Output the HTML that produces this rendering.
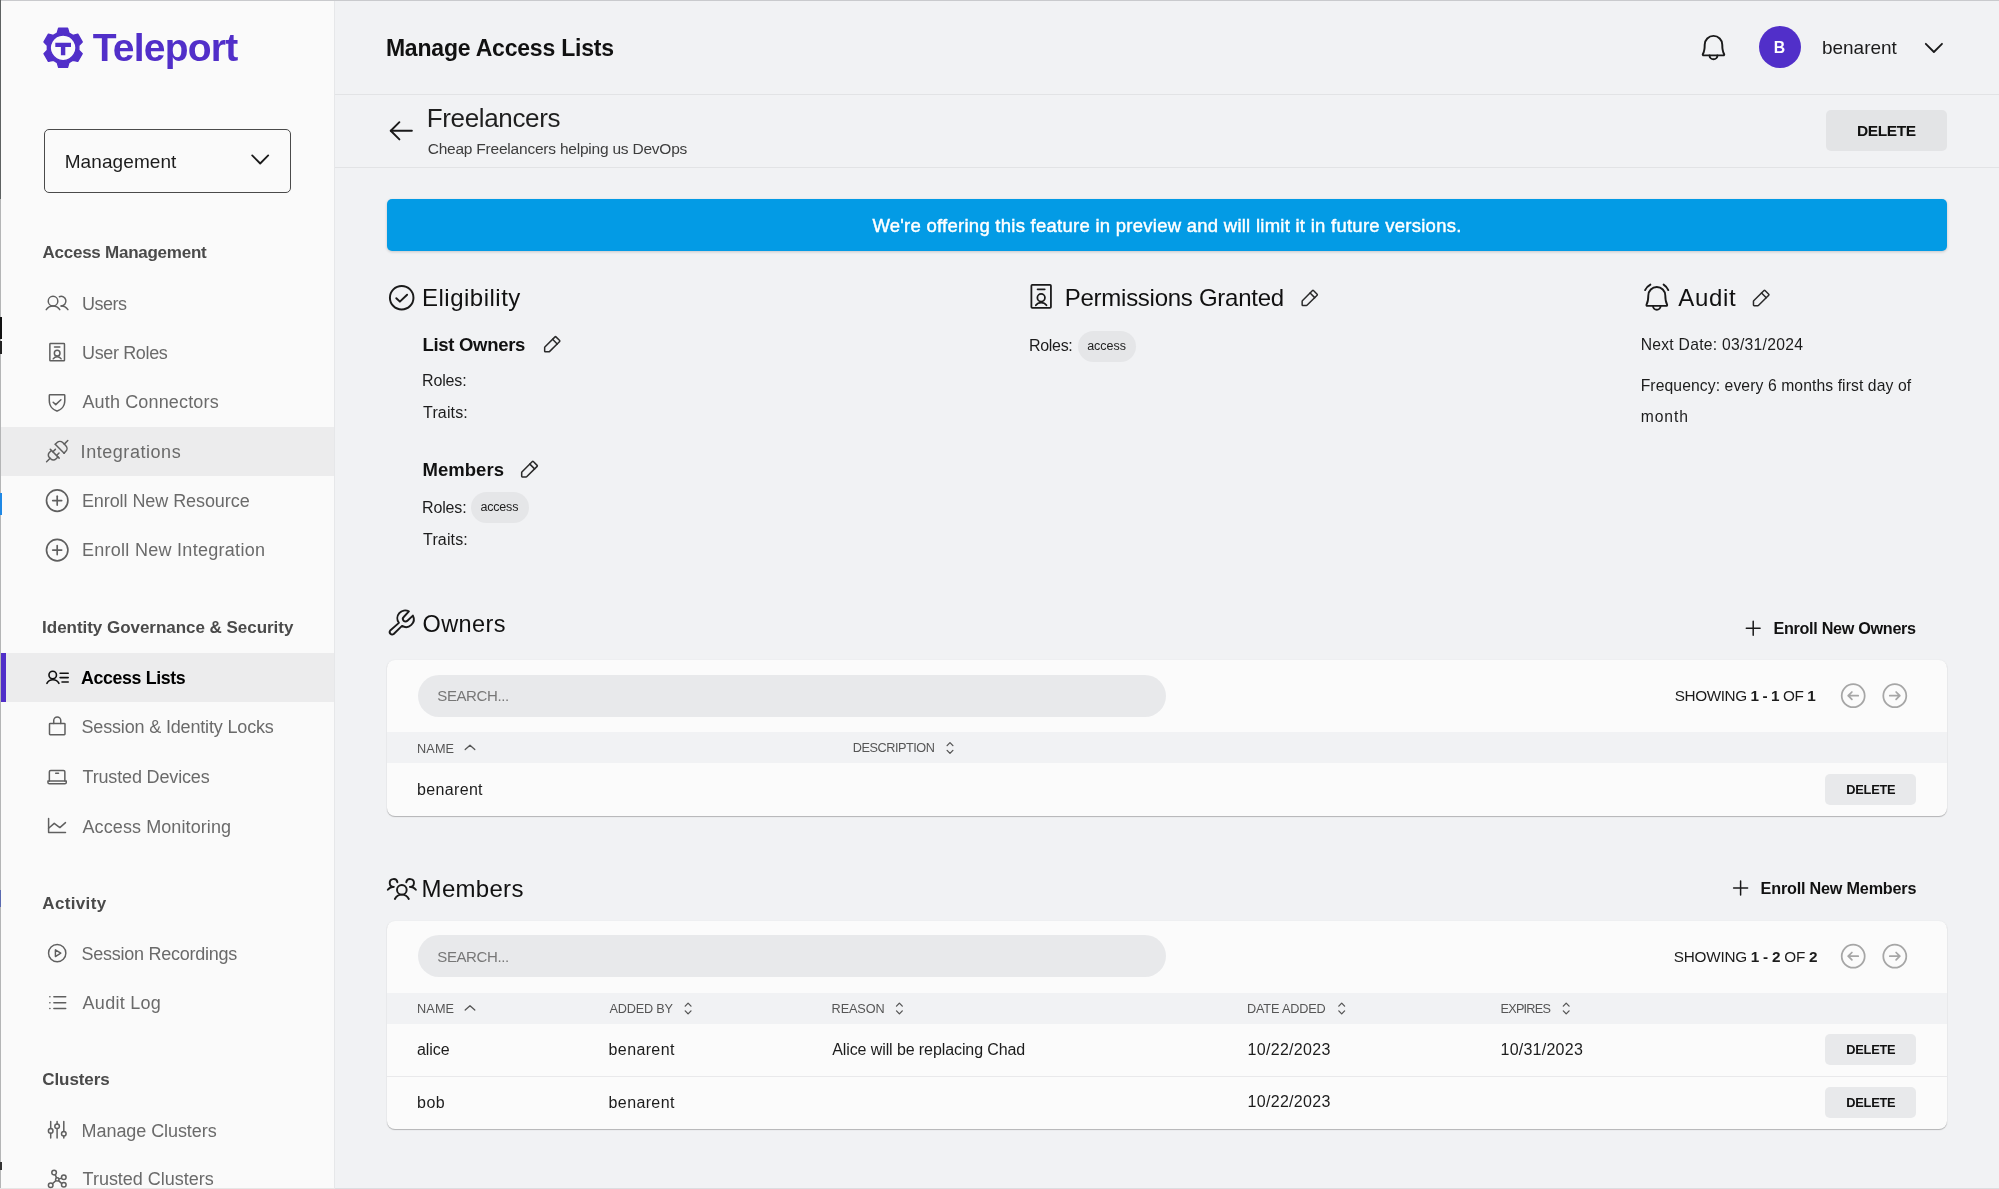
<!DOCTYPE html>
<html><head><meta charset="utf-8"><title>Manage Access Lists</title>
<style>
html,body{margin:0;padding:0;}
body{width:1999px;height:1189px;overflow:hidden;position:relative;background:#f1f2f4;font-family:"Liberation Sans",sans-serif;}
.b{position:absolute;box-sizing:border-box;}
.t{position:absolute;white-space:nowrap;}
.t b{font-weight:bold;}
.ov{position:absolute;left:0;top:0;}
</style></head><body>
<div class="b" style="left:0;top:0;width:335px;height:1189px;background:#fafafa;border-right:1px solid #e6e7e9"></div>
<div class="b" style="left:0;top:0;width:1999px;height:1px;background:#c9cacd"></div>
<div class="b" style="left:0;top:0;width:1px;height:1189px;background:#b4b5b6"></div><div class="b" style="left:0;top:0;width:1px;height:199px;background:#5e6262"></div><div class="b" style="left:0;top:317px;width:2px;height:22px;background:#111"></div><div class="b" style="left:0;top:341px;width:2px;height:13px;background:#222"></div><div class="b" style="left:0;top:493px;width:2px;height:22px;background:#1e88e5"></div><div class="b" style="left:0;top:890px;width:1px;height:17px;background:#5a6ab0"></div><div class="b" style="left:0;top:1162px;width:2px;height:8px;background:#333"></div><div class="b" style="left:0;top:1188px;width:335px;height:1px;background:#e6e6e6"></div><div class="b" style="left:335px;top:1188px;width:1664px;height:1px;background:#dcdde0"></div>
<div class="b" style="left:335px;top:94px;width:1664px;height:1px;background:#e2e3e5"></div>
<div class="b" style="left:335px;top:167px;width:1664px;height:1px;background:#e2e3e5"></div>
<div class="b" style="left:44px;top:129px;width:247px;height:64px;border:1.5px solid #4a4a4a;border-radius:5px"></div>
<div class="b" style="left:1px;top:427px;width:333px;height:49px;background:#ececed"></div>
<div class="b" style="left:1px;top:653px;width:333px;height:49px;background:#ececed"></div>
<div class="b" style="left:1px;top:653px;width:5px;height:49px;background:#512fc9"></div>
<div class="b" style="left:1759px;top:26px;width:42px;height:42px;border-radius:50%;background:#512fc9"></div>
<div class="b" style="left:1826px;top:110px;width:121px;height:41px;border-radius:5px;background:#e3e4e6"></div>
<div class="b" style="left:387px;top:199px;width:1560px;height:52px;border-radius:5px;background:#039be5;box-shadow:0 1px 3px rgba(0,0,0,.18)"></div>
<div class="b" style="left:470.5px;top:492px;width:58.5px;height:31px;border-radius:16px;background:#e5e6e8"></div>
<div class="b" style="left:1077.7px;top:330.5px;width:58.3px;height:31px;border-radius:16px;background:#e5e6e8"></div>
<div class="b" style="left:386.5px;top:660px;width:1560.5px;height:155.5px;border-radius:8px;background:#fbfbfb;box-shadow:0 1px 1px rgba(0,0,0,.25),0 0 2px rgba(0,0,0,.06)"></div>
<div class="b" style="left:418px;top:674.6px;width:748px;height:42px;border-radius:21px;background:#e8e9eb"></div>
<div class="b" style="left:386.5px;top:732px;width:1560.5px;height:31px;background:#f1f2f4"></div>
<div class="b" style="left:1825px;top:774px;width:91px;height:31px;border-radius:5px;background:#e8e9eb"></div>
<div class="b" style="left:386.5px;top:920.5px;width:1560.5px;height:208px;border-radius:8px;background:#fbfbfb;box-shadow:0 1px 1px rgba(0,0,0,.25),0 0 2px rgba(0,0,0,.06)"></div>
<div class="b" style="left:418px;top:935.1px;width:748px;height:42px;border-radius:21px;background:#e8e9eb"></div>
<div class="b" style="left:386.5px;top:992.5px;width:1560.5px;height:31px;background:#f1f2f4"></div>
<div class="b" style="left:386.5px;top:1076px;width:1560.5px;height:1px;background:#e9e9eb"></div>
<div class="b" style="left:1825px;top:1034px;width:91px;height:31px;border-radius:5px;background:#e8e9eb"></div>
<div class="b" style="left:1825px;top:1087px;width:91px;height:31px;border-radius:5px;background:#e8e9eb"></div>
<svg class="ov" width="1999" height="1189" viewBox="0 0 1999 1189"><path d="M57.24,33.02 L58.64,28.30 L67.56,28.30 L68.96,33.02 L72.97,35.34 L77.75,34.19 L82.21,41.92 L78.83,45.48 L78.83,50.12 L82.21,53.68 L77.75,61.41 L72.97,60.26 L68.96,62.58 L67.56,67.30 L58.64,67.30 L57.24,62.58 L53.23,60.26 L48.45,61.41 L43.99,53.68 L47.37,50.12 L47.37,45.48 L43.99,41.92 L48.45,34.19 L53.23,35.34Z M63.1,35.0 A12.8,12.8 0 1 0 63.11,35.0 Z" fill="#512fc9" fill-rule="evenodd" stroke="#512fc9" stroke-width="1.4" stroke-linejoin="round"/><path d="M55.3,42.8 H71 V47 H65.3 V55.2 H60.9 V47 H55.3 Z" fill="#512fc9"/><g transform="translate(45.3,291.2) scale(0.092)" fill="none" stroke="#5f5f5f" stroke-width="16" stroke-linecap="round" stroke-linejoin="round" ><circle cx="84" cy="108" r="52"/><path d="M10.23,200a88,88,0,0,1,147.54,0"/><path d="M172,160a87.93,87.93,0,0,1,73.77,40"/><path d="M152.69,59.7A52,52,0,1,1,172,160"/></g><g transform="translate(46.54,341.57) scale(0.083)" fill="none" stroke="#5f5f5f" stroke-width="18" stroke-linecap="round" stroke-linejoin="round" ><line x1="96" y1="64" x2="160" y2="64"/><circle cx="128" cy="140" r="34"/><path d="M80,208a60,60,0,0,1,96,0"/><rect x="40" y="24" width="176" height="208" rx="8"/></g><g transform="translate(45.78,390.58) scale(0.088)" fill="none" stroke="#5f5f5f" stroke-width="17" stroke-linecap="round" stroke-linejoin="round" ><path d="M40,114.79V56a8,8,0,0,1,8-8H208a8,8,0,0,1,8,8v58.77c0,84.18-71.31,112.07-85.54,116.8a7.54,7.54,0,0,1-4.92,0C111.31,226.86,40,199,40,114.79Z"/><polyline points="172 104 113.33 160 84 132"/></g><g transform="matrix(0.7071,-0.7071,0.7071,0.7071,57.2,451.2)" fill="none" stroke="#5f5f5f" stroke-width="1.5" stroke-linecap="round" stroke-linejoin="round"><path d="M3.5,-6.3 V6.3"/><path d="M3.5,-6.2 H6 A4,4 0 0 1 10,-2.2 V2.2 A4,4 0 0 1 6,6.2 H3.5"/><path d="M10,0 H15"/><path d="M-3.5,-6.3 V6.3"/><path d="M-3.5,-4.6 H-6.5 A3.5,3.5 0 0 0 -10,-1.1 V1.1 A3.5,3.5 0 0 0 -6.5,4.6 H-3.5"/><path d="M-10,0 H-15"/><path d="M-3.5,-2.6 H0 M-3.5,2.6 H0"/></g><g transform="translate(42.928000000000004,486.32800000000003) scale(0.1115)" fill="none" stroke="#5f5f5f" stroke-width="15" stroke-linecap="round" stroke-linejoin="round" ><circle cx="128" cy="128" r="96"/><line x1="88" y1="128" x2="168" y2="128"/><line x1="128" y1="88" x2="128" y2="168"/></g><g transform="translate(42.928000000000004,535.828) scale(0.1115)" fill="none" stroke="#5f5f5f" stroke-width="15" stroke-linecap="round" stroke-linejoin="round" ><circle cx="128" cy="128" r="96"/><line x1="88" y1="128" x2="168" y2="128"/><line x1="128" y1="88" x2="128" y2="168"/></g><g fill="none" stroke="#111" stroke-width="1.6" stroke-linecap="round" stroke-linejoin="round"><circle cx="52.72" cy="675.05" r="3.75"/><path d="M46.9,683.4 A6.8,6.8 0 0 1 58.95,683.4"/><path d="M60.1,673.2 H68.2 M60.1,677.6 H68.2 M62,682 H68.2"/></g><g transform="translate(45.98,715.65) scale(0.088)" fill="none" stroke="#5f5f5f" stroke-width="17" stroke-linecap="round" stroke-linejoin="round" ><rect x="40" y="88" width="176" height="128" rx="8"/><path d="M88,88V56a40,40,0,0,1,80,0V88"/></g><g transform="translate(45.84,765.48) scale(0.088)" fill="none" stroke="#5f5f5f" stroke-width="17" stroke-linecap="round" stroke-linejoin="round" ><path d="M40,176V72A16,16,0,0,1,56,56H200a16,16,0,0,1,16,16V176"/><path d="M24,176H232v16a16,16,0,0,1-16,16H40a16,16,0,0,1-16-16V176Z"/><line x1="144" y1="88" x2="112" y2="88"/></g><g transform="translate(45.78,814.2) scale(0.088)" fill="none" stroke="#5f5f5f" stroke-width="17" stroke-linecap="round" stroke-linejoin="round" ><polyline points="224 208 32 208 32 48"/><polyline points="224 96 160 152 96 104 32 160"/></g><g transform="translate(45.68,941.68) scale(0.09)" fill="none" stroke="#5f5f5f" stroke-width="16" stroke-linecap="round" stroke-linejoin="round" ><circle cx="128" cy="128" r="96"/><polygon points="168 128 108 90 108 166 168 128"/></g><g transform="translate(45.8,990.9) scale(0.092)" fill="none" stroke="#5f5f5f" stroke-width="17" stroke-linecap="round" stroke-linejoin="round" ><line x1="88" y1="64" x2="216" y2="64"/><line x1="88" y1="128" x2="216" y2="128"/><line x1="88" y1="192" x2="216" y2="192"/><line x1="44" y1="64" x2="45" y2="64"/><line x1="44" y1="128" x2="45" y2="128"/><line x1="44" y1="192" x2="45" y2="192"/></g><g fill="none" stroke="#5f5f5f" stroke-width="1.5" stroke-linecap="round" stroke-linejoin="round"><path d="M50.7,1121.6 V1128.6 M50.7,1133.2 V1138 M57.1,1121.6 V1123.9 M57.1,1128.5 V1138 M63.8,1121.6 V1131.4 M63.8,1136 V1138"/><circle cx="50.7" cy="1130.9" r="2.3"/><circle cx="57.1" cy="1126.2" r="2.3"/><circle cx="63.8" cy="1133.7" r="2.3"/></g><g fill="none" stroke="#5f5f5f" stroke-width="1.5" stroke-linecap="round" stroke-linejoin="round"><path d="M55.2,1174.6 L57.25,1179.4 L61.8,1178.1 M57.25,1179.4 L61.8,1183.6 M57.25,1179.4 L52.4,1183.8"/><circle cx="54.1" cy="1172.6" r="2.3" fill="#fafafa"/><circle cx="63.8" cy="1177.2" r="2.3" fill="#fafafa"/><circle cx="63.8" cy="1184.7" r="2.3" fill="#fafafa"/><circle cx="50.7" cy="1185.3" r="2.3" fill="#fafafa"/><circle cx="57.25" cy="1179.4" r="1.7" fill="#fafafa"/></g><g fill="none" stroke="#1a1a1a" stroke-width="1.8" stroke-linecap="round" stroke-linejoin="round"><path d="M1925.8,43.8 L1933.9,52 L1942,43.8"/><path d="M252.2,155.4 L260.2,163.5 L268.2,155.4"/></g><g transform="translate(385.96,115.44) scale(0.12)" fill="none" stroke="#1a1a1a" stroke-width="16" stroke-linecap="round" stroke-linejoin="round" ><line x1="216" y1="128" x2="40" y2="128"/><polyline points="112 56 40 128 112 200"/></g><g transform="translate(1697.87,31.97) scale(0.122)" fill="none" stroke="#1a1a1a" stroke-width="16" stroke-linecap="round" stroke-linejoin="round" ><path d="M96,192a32,32,0,0,0,64,0"/><path d="M56,104a72,72,0,0,1,144,0c0,35.82,8.3,64.6,14.9,76A8,8,0,0,1,208,192H48a8,8,0,0,1-6.88-12C47.71,168.6,56,139.81,56,104Z"/></g><g transform="translate(1641.7,283.27) scale(0.118)" fill="none" stroke="#1a1a1a" stroke-width="16" stroke-linecap="round" stroke-linejoin="round" ><path d="M96,192a32,32,0,0,0,64,0"/><path d="M56,104a72,72,0,0,1,144,0c0,35.82,8.3,64.6,14.9,76A8,8,0,0,1,208,192H48a8,8,0,0,1-6.88-12C47.71,168.6,56,139.81,56,104Z"/><path d="M28.8,57.9 A104,104 0 0 1 73.7,11.3"/><path d="M185.6,11.3 A104,104 0 0 1 225.4,57.9"/></g><g transform="translate(386.0,282.0) scale(0.1226)" fill="none" stroke="#1a1a1a" stroke-width="16" stroke-linecap="round" stroke-linejoin="round" ><circle cx="128" cy="128" r="96"/><polyline points="172 104 113.33 160 84 132"/></g><g transform="translate(1026.95,282.22) scale(0.111)" fill="none" stroke="#1a1a1a" stroke-width="16" stroke-linecap="round" stroke-linejoin="round" ><line x1="96" y1="64" x2="160" y2="64"/><circle cx="128" cy="140" r="34"/><path d="M80,208a60,60,0,0,1,96,0"/><rect x="40" y="24" width="176" height="208" rx="8"/></g><g fill="none" stroke="#1a1a1a" stroke-width="1.9" stroke-linecap="round" stroke-linejoin="round"><path d="M408.9,611.4 A7.8,7.8 0 0 0 398.9,622.9 L390.2,630.5 A2.5,2.5 0 0 0 393.7,634 L402,625.9 A7.8,7.8 0 0 0 412.9,615.6 L407.4,620.8 A2.6,2.6 0 0 1 403.7,617 Z"/></g><g transform="translate(386.35,872.82) scale(0.121)" fill="none" stroke="#1a1a1a" stroke-width="16" stroke-linecap="round" stroke-linejoin="round" ><circle cx="128" cy="140" r="40"/><path d="M196,116a60,60,0,0,1,48,24"/><path d="M12,140a60,60,0,0,1,48-24"/><path d="M70.4,216a64.07,64.07,0,0,1,115.2,0"/><path d="M60,116A32,32,0,1,1,91.4,78"/><path d="M164.6,78A32,32,0,1,1,196,116"/></g><g transform="translate(541.36,334.02) scale(0.0825)" fill="none" stroke="#2a2a2a" stroke-width="18" stroke-linecap="round" stroke-linejoin="round" ><path d="M92.69,216H48a8,8,0,0,1-8-8V163.31a8,8,0,0,1,2.34-5.65L165.66,34.34a8,8,0,0,1,11.31,0L221.66,79a8,8,0,0,1,0,11.31L98.34,213.66A8,8,0,0,1,92.69,216Z"/><line x1="136" y1="64" x2="192" y2="120"/></g><g transform="translate(518.28,458.65999999999997) scale(0.085)" fill="none" stroke="#2a2a2a" stroke-width="18" stroke-linecap="round" stroke-linejoin="round" ><path d="M92.69,216H48a8,8,0,0,1-8-8V163.31a8,8,0,0,1,2.34-5.65L165.66,34.34a8,8,0,0,1,11.31,0L221.66,79a8,8,0,0,1,0,11.31L98.34,213.66A8,8,0,0,1,92.69,216Z"/><line x1="136" y1="64" x2="192" y2="120"/></g><g transform="translate(1298.86,287.71999999999997) scale(0.0825)" fill="none" stroke="#2a2a2a" stroke-width="18" stroke-linecap="round" stroke-linejoin="round" ><path d="M92.69,216H48a8,8,0,0,1-8-8V163.31a8,8,0,0,1,2.34-5.65L165.66,34.34a8,8,0,0,1,11.31,0L221.66,79a8,8,0,0,1,0,11.31L98.34,213.66A8,8,0,0,1,92.69,216Z"/><line x1="136" y1="64" x2="192" y2="120"/></g><g transform="translate(1750.1119999999999,287.584) scale(0.08399999999999977)" fill="none" stroke="#2a2a2a" stroke-width="18" stroke-linecap="round" stroke-linejoin="round" ><path d="M92.69,216H48a8,8,0,0,1-8-8V163.31a8,8,0,0,1,2.34-5.65L165.66,34.34a8,8,0,0,1,11.31,0L221.66,79a8,8,0,0,1,0,11.31L98.34,213.66A8,8,0,0,1,92.69,216Z"/><line x1="136" y1="64" x2="192" y2="120"/></g><g fill="none" stroke="#1a1a1a" stroke-width="1.5" stroke-linecap="round"><path d="M1746.3,628.2 H1760.1 M1753.2,621.3 V635.2"/><path d="M1733.6,888 H1747.6 M1740.6,881 V895"/></g><g fill="none" stroke="#a6a6a6" stroke-width="1.75" stroke-linecap="round" stroke-linejoin="round"><circle cx="1853.2" cy="695.7" r="11.5"/><path d="M1858.2,695.7 H1848.2 M1851.9,692.0 L1848.2,695.7 L1851.9,699.4000000000001"/><circle cx="1894.8" cy="695.7" r="11.5"/><path d="M1889.8,695.7 H1899.8 M1896.1,692.0 L1899.8,695.7 L1896.1,699.4000000000001"/><circle cx="1853.2" cy="956.2" r="11.5"/><path d="M1858.2,956.2 H1848.2 M1851.9,952.5 L1848.2,956.2 L1851.9,959.9000000000001"/><circle cx="1894.8" cy="956.2" r="11.5"/><path d="M1889.8,956.2 H1899.8 M1896.1,952.5 L1899.8,956.2 L1896.1,959.9000000000001"/></g><g fill="none" stroke="#555" stroke-width="1.3" stroke-linecap="round" stroke-linejoin="round"><path d="M465.2,749.6 L470,745.2 L474.8,749.6"/><path d="M465.2,1010.1 L470,1005.7 L474.8,1010.1"/><path d="M947.1,745.6 L950,742.6 L952.9,745.6 M947.1,750.4 L950,753.4 L952.9,750.4"/><path d="M685.2,1006.1 L688.1,1003.1 L691.0,1006.1 M685.2,1010.9 L688.1,1013.9 L691.0,1010.9"/><path d="M896.5,1006.1 L899.4,1003.1 L902.3,1006.1 M896.5,1010.9 L899.4,1013.9 L902.3,1010.9"/><path d="M1338.8,1006.1 L1341.7,1003.1 L1344.6000000000001,1006.1 M1338.8,1010.9 L1341.7,1013.9 L1344.6000000000001,1010.9"/><path d="M1563.3,1006.1 L1566.2,1003.1 L1569.1000000000001,1006.1 M1563.3,1010.9 L1566.2,1013.9 L1569.1000000000001,1010.9"/></g></svg>
<div style="position:absolute;left:0;top:0;width:1999px;height:1189px;will-change:transform"><div class="t" style="left:92.7px;top:28px;font-size:39px;line-height:39px;letter-spacing:-0.771px;color:#512fc9;font-weight:bold;">Teleport</div><div class="t" style="left:64.7px;top:152px;font-size:19px;line-height:19px;letter-spacing:0.089px;color:#1c1c1c;">Management</div><div class="t" style="left:42.5px;top:244px;font-size:17px;line-height:17px;letter-spacing:-0.25px;color:#4a4a4a;font-weight:bold;">Access Management</div><div class="t" style="left:81.9px;top:295px;font-size:18px;line-height:18px;letter-spacing:-0.45px;color:#6a6a6a;">Users</div><div class="t" style="left:82.0px;top:344px;font-size:18px;line-height:18px;letter-spacing:-0.356px;color:#6a6a6a;">User Roles</div><div class="t" style="left:82.4px;top:393px;font-size:18px;line-height:18px;letter-spacing:0.157px;color:#6a6a6a;">Auth Connectors</div><div class="t" style="left:80.6px;top:443px;font-size:18px;line-height:18px;letter-spacing:0.545px;color:#6a6a6a;">Integrations</div><div class="t" style="left:81.9px;top:492px;font-size:18px;line-height:18px;letter-spacing:-0.072px;color:#6a6a6a;">Enroll New Resource</div><div class="t" style="left:81.9px;top:541px;font-size:18px;line-height:18px;letter-spacing:0.286px;color:#6a6a6a;">Enroll New Integration</div><div class="t" style="left:42.1px;top:619px;font-size:17px;line-height:17px;letter-spacing:-0.034px;color:#4a4a4a;font-weight:bold;">Identity Governance &amp; Security</div><div class="t" style="left:81.0px;top:670px;font-size:17.8px;line-height:17.8px;letter-spacing:-0.364px;color:#000;font-weight:bold;">Access Lists</div><div class="t" style="left:81.5px;top:718px;font-size:18px;line-height:18px;letter-spacing:-0.165px;color:#6a6a6a;">Session &amp; Identity Locks</div><div class="t" style="left:82.5px;top:768px;font-size:18px;line-height:18px;letter-spacing:-0.157px;color:#6a6a6a;">Trusted Devices</div><div class="t" style="left:82.5px;top:818px;font-size:18px;line-height:18px;letter-spacing:0.094px;color:#6a6a6a;">Access Monitoring</div><div class="t" style="left:42.3px;top:895px;font-size:17px;line-height:17px;letter-spacing:0.343px;color:#4a4a4a;font-weight:bold;">Activity</div><div class="t" style="left:81.6px;top:945px;font-size:18px;line-height:18px;letter-spacing:-0.259px;color:#6a6a6a;">Session Recordings</div><div class="t" style="left:82.6px;top:994px;font-size:18px;line-height:18px;letter-spacing:0.275px;color:#6a6a6a;">Audit Log</div><div class="t" style="left:42.3px;top:1071px;font-size:17px;line-height:17px;letter-spacing:-0.086px;color:#4a4a4a;font-weight:bold;">Clusters</div><div class="t" style="left:81.6px;top:1122px;font-size:18px;line-height:18px;letter-spacing:-0.071px;color:#6a6a6a;">Manage Clusters</div><div class="t" style="left:82.6px;top:1170px;font-size:18px;line-height:18px;letter-spacing:-0.013px;color:#6a6a6a;">Trusted Clusters</div><div class="t" style="left:385.9px;top:37px;font-size:23px;line-height:23px;letter-spacing:-0.2px;color:#111;font-weight:bold;">Manage Access Lists</div><div class="t" style="left:1773.8px;top:40px;font-size:15.8px;line-height:15.8px;letter-spacing:2.2px;color:#fff;font-weight:bold;">B</div><div class="t" style="left:1822.0px;top:38px;font-size:19px;line-height:19px;letter-spacing:-0.029px;color:#1c1c1c;">benarent</div><div class="t" style="left:426.7px;top:105px;font-size:26px;line-height:26px;letter-spacing:-0.34px;color:#1f1f1f;">Freelancers</div><div class="t" style="left:427.7px;top:141px;font-size:15.5px;line-height:15.5px;letter-spacing:-0.218px;color:#3d3d3d;">Cheap Freelancers helping us DevOps</div><div class="t" style="left:1857.1px;top:123px;font-size:15.5px;line-height:15.5px;letter-spacing:-0.44px;color:#111;font-weight:bold;">DELETE</div><div class="t" style="left:872.4px;top:217px;font-size:18.5px;line-height:18.5px;letter-spacing:0.261px;color:#fff;-webkit-text-stroke:0.45px #fff;">We&#39;re offering this feature in preview and will limit it in future versions.</div><div class="t" style="left:422.0px;top:286px;font-size:24px;line-height:24px;letter-spacing:0.5px;color:#111;">Eligibility</div><div class="t" style="left:422.5px;top:336px;font-size:18.5px;line-height:18.5px;letter-spacing:-0.3px;color:#111;font-weight:bold;">List Owners</div><div class="t" style="left:422.1px;top:373px;font-size:16px;line-height:16px;letter-spacing:-0.16px;color:#1c1c1c;">Roles:</div><div class="t" style="left:423.1px;top:405px;font-size:16px;line-height:16px;letter-spacing:0.133px;color:#1c1c1c;">Traits:</div><div class="t" style="left:422.45px;top:461px;font-size:18.5px;line-height:18.5px;letter-spacing:0.05px;color:#111;font-weight:bold;">Members</div><div class="t" style="left:422.1px;top:500px;font-size:16px;line-height:16px;letter-spacing:-0.16px;color:#1c1c1c;">Roles:</div><div class="t" style="left:480.5px;top:501px;font-size:12.5px;line-height:12.5px;letter-spacing:-0.2px;color:#222;">access</div><div class="t" style="left:423.1px;top:532px;font-size:16px;line-height:16px;letter-spacing:0.133px;color:#1c1c1c;">Traits:</div><div class="t" style="left:1064.8px;top:286px;font-size:24px;line-height:24px;letter-spacing:-0.267px;color:#111;">Permissions Granted</div><div class="t" style="left:1029.0px;top:338px;font-size:16px;line-height:16px;letter-spacing:-0.32px;color:#1c1c1c;">Roles:</div><div class="t" style="left:1087.2px;top:340px;font-size:12.5px;line-height:12.5px;letter-spacing:-0.04px;color:#222;">access</div><div class="t" style="left:1678.3px;top:286px;font-size:24px;line-height:24px;letter-spacing:0.65px;color:#111;">Audit</div><div class="t" style="left:1640.7px;top:337px;font-size:15.7px;line-height:15.7px;letter-spacing:0.26px;color:#1c1c1c;">Next Date: 03/31/2024</div><div class="t" style="left:1640.7px;top:378px;font-size:15.7px;line-height:15.7px;letter-spacing:0.097px;color:#1c1c1c;">Frequency: every 6 months first day of</div><div class="t" style="left:1640.7px;top:409px;font-size:15.7px;line-height:15.7px;letter-spacing:0.9px;color:#1c1c1c;">month</div><div class="t" style="left:422.5px;top:613px;font-size:23.5px;line-height:23.5px;letter-spacing:0.4px;color:#111;">Owners</div><div class="t" style="left:1773.4px;top:620px;font-size:16.2px;line-height:16.2px;letter-spacing:-0.3px;color:#111;font-weight:bold;">Enroll New Owners</div><div class="t" style="left:437.3px;top:688px;font-size:15px;line-height:15px;letter-spacing:-0.4px;color:#777;">SEARCH...</div><div class="t" style="left:1674.7px;top:688px;font-size:15.3px;line-height:15.3px;letter-spacing:-0.4px;color:#1c1c1c;">SHOWING <b>1 - 1</b> OF <b>1</b></div><div class="t" style="left:417.0px;top:743px;font-size:12.7px;line-height:12.7px;letter-spacing:0.133px;color:#555;">NAME</div><div class="t" style="left:852.8px;top:742px;font-size:12.7px;line-height:12.7px;letter-spacing:-0.46px;color:#555;">DESCRIPTION</div><div class="t" style="left:417.0px;top:782px;font-size:16px;line-height:16px;letter-spacing:0.343px;color:#1c1c1c;">benarent</div><div class="t" style="left:1846.3px;top:784px;font-size:12.8px;line-height:12.8px;letter-spacing:-0.24px;color:#111;font-weight:bold;">DELETE</div><div class="t" style="left:421.6px;top:877px;font-size:24px;line-height:24px;letter-spacing:0.3px;color:#111;">Members</div><div class="t" style="left:1760.6px;top:880px;font-size:16.2px;line-height:16.2px;letter-spacing:-0.2px;color:#111;font-weight:bold;">Enroll New Members</div><div class="t" style="left:437.3px;top:949px;font-size:15px;line-height:15px;letter-spacing:-0.4px;color:#777;">SEARCH...</div><div class="t" style="left:1673.8px;top:949px;font-size:15.3px;line-height:15.3px;letter-spacing:-0.247px;color:#1c1c1c;">SHOWING <b>1 - 2</b> OF <b>2</b></div><div class="t" style="left:417.0px;top:1003px;font-size:12.7px;line-height:12.7px;letter-spacing:0.133px;color:#555;">NAME</div><div class="t" style="left:609.6px;top:1003px;font-size:12.7px;line-height:12.7px;letter-spacing:-0.229px;color:#555;">ADDED BY</div><div class="t" style="left:831.6px;top:1003px;font-size:12.7px;line-height:12.7px;letter-spacing:-0.12px;color:#555;">REASON</div><div class="t" style="left:1247.0px;top:1003px;font-size:12.7px;line-height:12.7px;letter-spacing:-0.156px;color:#555;">DATE ADDED</div><div class="t" style="left:1500.5px;top:1003px;font-size:12.7px;line-height:12.7px;letter-spacing:-0.767px;color:#555;">EXPIRES</div><div class="t" style="left:417.0px;top:1042px;font-size:16px;line-height:16px;letter-spacing:-0.05px;color:#1c1c1c;">alice</div><div class="t" style="left:608.6px;top:1042px;font-size:16px;line-height:16px;letter-spacing:0.371px;color:#1c1c1c;">benarent</div><div class="t" style="left:832.2px;top:1042px;font-size:16px;line-height:16px;letter-spacing:-0.096px;color:#1c1c1c;">Alice will be replacing Chad</div><div class="t" style="left:1247.5px;top:1042px;font-size:16px;line-height:16px;letter-spacing:0.311px;color:#1c1c1c;">10/22/2023</div><div class="t" style="left:1500.5px;top:1042px;font-size:16px;line-height:16px;letter-spacing:0.244px;color:#1c1c1c;">10/31/2023</div><div class="t" style="left:1846.3px;top:1044px;font-size:12.8px;line-height:12.8px;letter-spacing:-0.24px;color:#111;font-weight:bold;">DELETE</div><div class="t" style="left:417.0px;top:1095px;font-size:16px;line-height:16px;letter-spacing:0.5px;color:#1c1c1c;">bob</div><div class="t" style="left:608.6px;top:1095px;font-size:16px;line-height:16px;letter-spacing:0.371px;color:#1c1c1c;">benarent</div><div class="t" style="left:1247.5px;top:1094px;font-size:16px;line-height:16px;letter-spacing:0.311px;color:#1c1c1c;">10/22/2023</div><div class="t" style="left:1846.3px;top:1097px;font-size:12.8px;line-height:12.8px;letter-spacing:-0.24px;color:#111;font-weight:bold;">DELETE</div></div>
</body></html>
